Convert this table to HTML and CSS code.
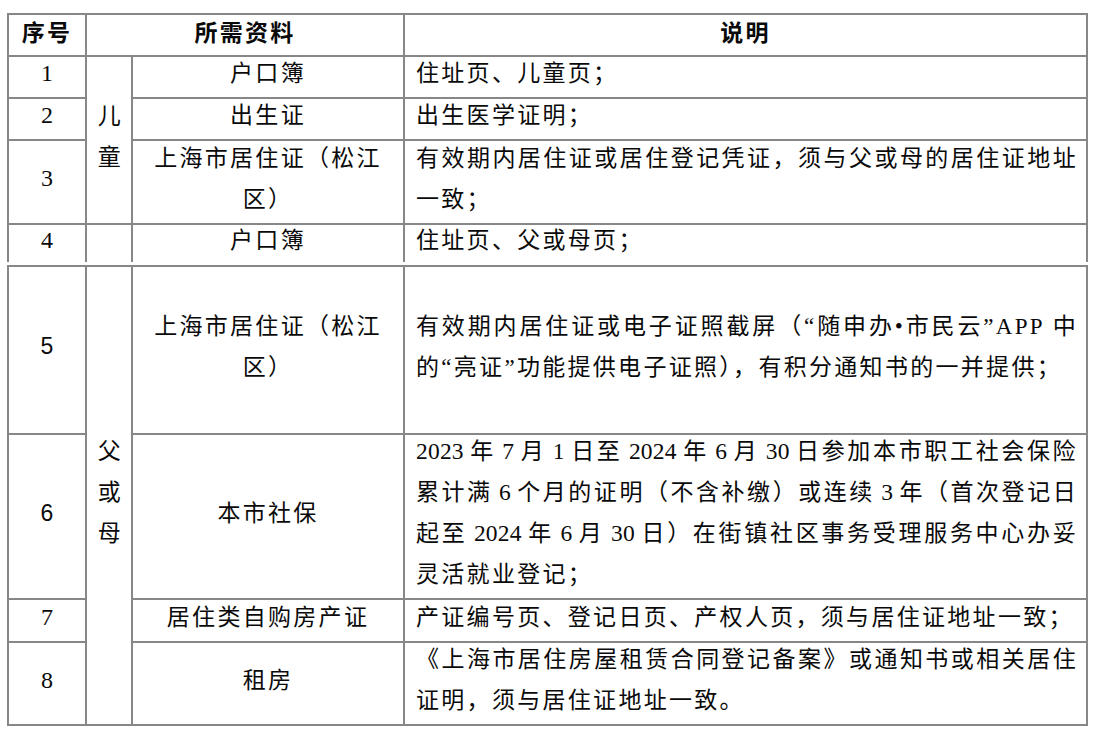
FILE: index.html
```html
<!DOCTYPE html>
<html lang="zh-CN">
<head>
<meta charset="utf-8">
<title>所需资料</title>
<link rel="stylesheet" href="styles.css">
</head>
<body>
<div class="page">
  <div class="grid grid-top">
    <div class="cell head">序号</div>
    <div class="cell head span2">所需资料</div>
    <div class="cell head">说明</div>

    <div class="cell num">1</div>
    <div class="cell group child">儿童</div>
    <div class="cell item">户口簿</div>
    <div class="cell desc">住址页、儿童页；</div>

    <div class="cell num">2</div>
    <div class="cell item">出生证</div>
    <div class="cell desc">出生医学证明；</div>

    <div class="cell num">3</div>
    <div class="cell item">上海市居住证（松江区）</div>
    <div class="cell desc"><span class="line just">有效期内居住证或居住登记凭证，须与父或母的居住证地址</span><span class="line">一致；</span></div>

    <div class="cell num open">4</div>
    <div class="cell open"></div>
    <div class="cell item open">户口簿</div>
    <div class="cell desc open">住址页、父或母页；</div>
  </div>

  <div class="grid grid-bottom">
    <div class="cell num sans">5</div>
    <div class="cell group parent">父或母</div>
    <div class="cell item">上海市居住证（松江区）</div>
    <div class="cell desc"><span class="line just">有效期内居住证或电子证照截屏（“随申办•市民云”APP 中</span><span class="line">的“亮证”功能提供电子证照），有积分通知书的一并提供；</span></div>

    <div class="cell num sans">6</div>
    <div class="cell item">本市社保</div>
    <div class="cell desc"><span class="line just"><span class="d">2023 </span>年<span class="d"> 7 </span>月<span class="d"> 1 </span>日至<span class="d"> 2024 </span>年<span class="d"> 6 </span>月<span class="d"> 30 </span>日参加本市职工社会保险</span><span class="line just">累计满<span class="d"> 6 </span>个月的证明（不含补缴）或连续<span class="d"> 3 </span>年（首次登记日</span><span class="line just">起至<span class="d"> 2024 </span>年<span class="d"> 6 </span>月<span class="d"> 30 </span>日）在街镇社区事务受理服务中心办妥</span><span class="line">灵活就业登记；</span></div>

    <div class="cell num">7</div>
    <div class="cell item">居住类自购房产证</div>
    <div class="cell desc">产证编号页、登记日页、产权人页，须与居住证地址一致；</div>

    <div class="cell num">8</div>
    <div class="cell item">租房</div>
    <div class="cell desc"><span class="line just">《上海市居住房屋租赁合同登记备案》或通知书或相关居住</span><span class="line">证明，须与居住证地址一致。</span></div>
  </div>
</div>
</body>
</html>
```

FILE: styles.css
```css
html, body {
  margin: 0;
  padding: 0;
  background: #ffffff;
}

body {
  font-family: "Liberation Serif", "Noto Sans CJK SC", serif;
  font-size: 23px;
  line-height: 41px;
  letter-spacing: 2.3px;
  color: #0a0a0a;
}

.page {
  padding: 13px 0 0 7px;
}

.grid {
  display: grid;
  grid-template-columns: 78px 46px 272px 683px;
  width: 1081px;
  box-sizing: border-box;
  border-left: 2px solid #878787;
  border-top: 2px solid #878787;
}

.grid-top {
  grid-template-rows: 42px 42px 42px 84px 37px;
}

.grid-bottom {
  margin-top: 3px;
  grid-template-rows: 168px 165px 43px 83px;
}

.cell {
  box-sizing: border-box;
  border-right: 2px solid #878787;
  border-bottom: 2px solid #878787;
  display: flex;
  flex-direction: column;
  justify-content: center;
  align-items: center;
  text-align: center;
  padding: 0 0 7px 0;
  min-width: 0;
}

.cell.open {
  border-bottom: none;
}

.head {
  font-weight: bold;
  font-family: "Noto Sans CJK SC", sans-serif;
}

.span2 {
  grid-column: span 2;
}

.num {
  font-size: 24px;
  letter-spacing: 0;
}

.num.sans {
  font-family: "Liberation Sans", sans-serif;
  font-size: 23px;
}

.group {
  padding: 0 0 6px 3px;
}

.group.child {
  grid-row: span 3;
}

.group.parent {
  grid-row: span 4;
}

.item {
  padding: 0 12px 7px 12px;
}

.desc {
  align-items: stretch;
  text-align: left;
  padding: 0 8px 7px 11px;
}

.line {
  display: block;
}

.just {
  text-align: justify;
  text-align-last: justify;
  text-justify: inter-character;
}

.d {
  font-size: 23.5px;
  letter-spacing: 0.2px;
}
```
